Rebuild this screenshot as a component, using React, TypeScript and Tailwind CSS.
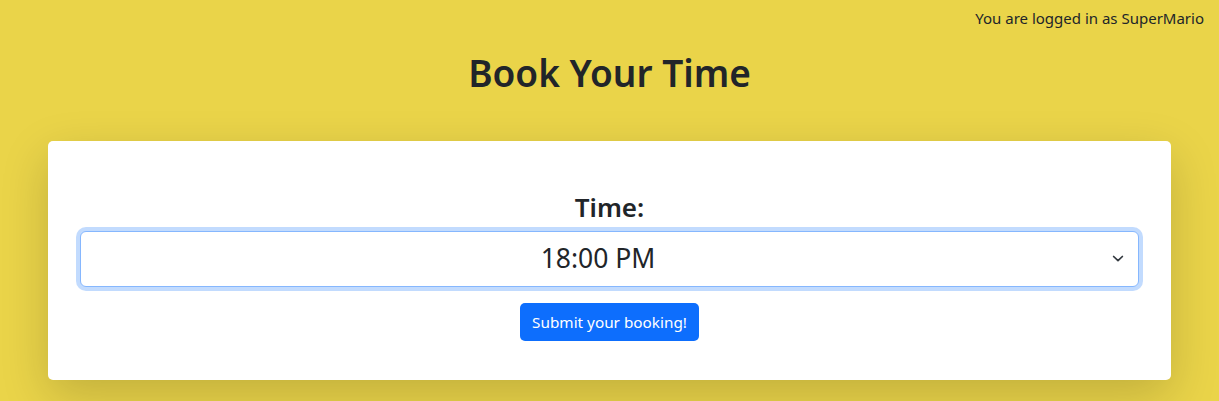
import { useState } from "react";

const times = ["16:00 PM", "17:00 PM", "18:00 PM", "19:00 PM", "20:00 PM"];

export default function App() {
  const [time, setTime] = useState("18:00 PM");

  return (
    <div className="min-h-screen bg-[#ead449] text-[#212529] font-['Noto_Sans',sans-serif]">
      <div className="flex justify-end pt-[6px] pr-[15px] text-[15px] leading-6">
        You are logged in as SuperMario
      </div>

      <h1 className="mt-[19px] text-center text-[37px] font-semibold leading-[48px]">Book Your Time</h1>

      <div className="mx-[48px] mt-[44px] rounded-[5px] bg-white px-8 pt-[50px] pb-[39px] shadow-[0_1rem_3rem_rgba(0,0,0,0.175)]">
        <form className="flex flex-col items-center">
          <label className="mb-[8px] text-[26px] font-semibold leading-[32px]">Time:</label>
          <div className="relative w-full">
            <select
              value={time}
              onChange={(e) => setTime(e.target.value)}
              className="h-[56px] w-full appearance-none rounded-[6px] border border-[#86b7fe] bg-white pl-4 pr-[39px] text-center text-[26.5px] text-[#212529] shadow-[0_0_0_4px_rgba(13,110,253,0.25)] outline-none"
            >
              {times.map((t) => (
                <option key={t} value={t}>
                  {t}
                </option>
              ))}
            </select>
            <svg
              className="pointer-events-none absolute right-[14px] top-1/2 h-[10px] w-[14px] -translate-y-1/2"
              viewBox="0 0 16 12"
              preserveAspectRatio="none"
              fill="none"
              stroke="#343a40"
              strokeWidth="2"
              strokeLinecap="round"
              strokeLinejoin="round"
            >
              <path d="m3 3 5 5 5-5" />
            </svg>
          </div>
          <button
            type="button"
            className="mt-4 h-[38px] rounded-[5px] bg-[#0d6efd] px-3 text-[15.3px] text-white"
          >
            Submit your booking!
          </button>
        </form>
      </div>
    </div>
  );
}
